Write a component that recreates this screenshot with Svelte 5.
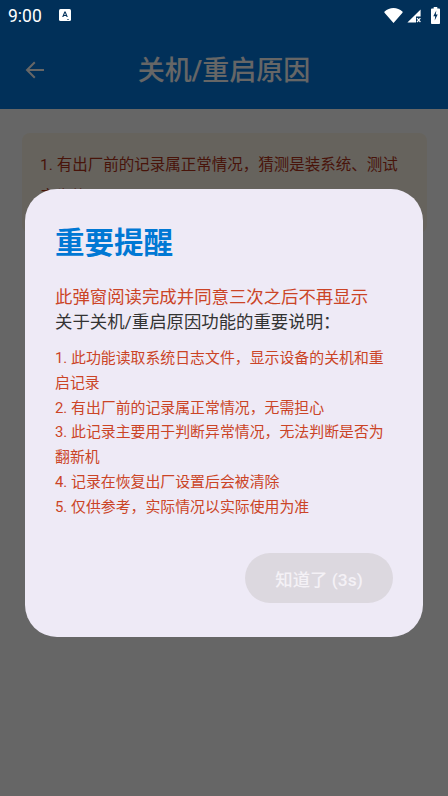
<script>
  const points = [
    "1. 此功能读取系统日志文件，显示设备的关机和重启记录",
    "2. 有出厂前的记录属正常情况，无需担心",
    "3. 此记录主要用于判断异常情况，无法判断是否为翻新机",
    "4. 记录在恢复出厂设置后会被清除",
    "5. 仅供参考，实际情况以实际使用为准",
  ];
</script>

<div class="page">
  <header class="appbar">
    <div class="status">
      <span class="time">9:00</span>
      <svg class="a-icon" viewBox="0 0 12 12" width="12" height="12">
        <rect width="12" height="12" rx="1.5" fill="#fff" />
        <path d="M3.2 8 5.4 2.6h1.2L8.8 8H7.6l-.4-1.1H4.8L4.4 8zM5.2 5.9h1.6L6 3.8z" fill="#02305a" />
        <path d="M8 10h.8v.7H8zM9.2 10H10v.7h-.8z" fill="#02305a" />
      </svg>
      <span class="spacer"></span>
      <svg class="wifi" viewBox="0 0 19 15" width="19" height="15">
        <path d="M0.6 3.6C0.2 3.9 0.2 4.4 0.5 4.7L9.5 15l9-10.3c.3-.3.3-.8-.1-1.1C15.9 1.4 12.9 0 9.5 0S3.1 1.4 0.6 3.6z" fill="#fff" />
      </svg>
      <svg class="signal" viewBox="0 0 14 14" width="14" height="14">
        <path d="M13.6 0.4V7.4H9V13.6H0.4z" fill="#fff" />
        <path d="M10 9.2l3.4 3.8M13.4 9.2 10 13" stroke="#fff" stroke-width="1.2" />
      </svg>
      <svg class="battery" viewBox="0 0 9 17" width="9" height="17">
        <path d="M2.7 0h3.6v1.6h1.9c.4 0 .8.4.8.8v13.8c0 .4-.4.8-.8.8H.8c-.4 0-.8-.4-.8-.8V2.4c0-.4.4-.8.8-.8h1.9z" fill="#fff" />
        <path d="M5.3 3.4 2.3 9.2h1.9l-.5 4.4 3-6H4.8z" fill="#02305a" />
      </svg>
    </div>
    <div class="toolbar">
      <svg class="back" viewBox="0 0 24 24" width="24" height="24">
        <path d="M21 12H4.5M11.8 4.2 4 12l7.8 7.8" fill="none" stroke="#666" stroke-width="2" />
      </svg>
      <h1>关机/重启原因</h1>
    </div>
  </header>

  <main class="content">
    <div class="note">
      1. 有出厂前的记录属正常情况，猜测是装系统、测试产生的记录
    </div>
  </main>

  <div class="scrim">
    <div class="dialog">
      <h2>重要提醒</h2>
      <p class="warn">此弹窗阅读完成并同意三次之后不再显示</p>
      <p class="lead">关于关机/重启原因功能的重要说明：</p>
      <ul>
        {#each points as point}
          <li>{point}</li>
        {/each}
      </ul>
      <div class="actions">
        <button disabled>知道了 (3s)</button>
      </div>
    </div>
  </div>
</div>

<style>
  :global(body) {
    margin: 0;
    background: #666;
  }

  .page {
    position: relative;
    width: 448px;
    height: 796px;
    overflow: hidden;
    background: #fff;
    font-family: Roboto, "Noto Sans CJK SC", sans-serif;
  }

  .appbar {
    height: 109px;
    background: #0479df;
    color: #fff;
  }

  .status {
    height: 30px;
    padding: 0 8px 0 8px;
    display: flex;
    align-items: center;
    position: relative;
    z-index: 2;
  }

  .time {
    font-size: 17.5px;
    line-height: 30px;
    padding-top: 1px;
    color: #fff;
    margin-right: 17px;
  }

  .spacer {
    flex: 1;
  }

  .signal {
    margin-left: 4px;
    margin-top: 2px;
  }

  .battery {
    margin-left: 10px;
  }

  .toolbar {
    height: 79px;
    padding-bottom: 2px;
    box-sizing: border-box;
    position: relative;
    display: flex;
    align-items: center;
    justify-content: center;
  }

  .back {
    position: absolute;
    left: 23px;
    top: 28px;
    z-index: 2;
  }

  h1 {
    margin: 0;
    font-size: 27px;
    font-weight: 500;
    color: #fff;
  }

  .content {
    padding: 24px 21px 0 22px;
  }

  .note {
    padding: 16px 18px 0;
    height: 100px;
    box-sizing: border-box;
    border-radius: 8px;
    background: #fff8e8;
    color: #b5341a;
    font-size: 15.5px;
    line-height: 32px;
  }

  .scrim {
    position: absolute;
    inset: 0;
    background: rgba(0, 0, 0, 0.6);
    display: flex;
    justify-content: center;
    padding-top: 189px;
    box-sizing: border-box;
  }

  .dialog {
    width: 398px;
    height: 448px;
    box-sizing: border-box;
    padding: 33px 30px 34px;
    border-radius: 32px;
    background: #eeeaf6;
    display: flex;
    flex-direction: column;
  }

  h2 {
    margin: 0 0 21px;
    font-size: 29.5px;
    line-height: 42px;
    font-weight: 700;
    color: #0078d4;
  }

  p {
    margin: 0;
    font-size: 17.4px;
    line-height: 25px;
  }

  .warn {
    color: #cb4426;
  }

  .lead {
    color: #333;
    margin-bottom: 11px;
  }

  ul {
    list-style: none;
    margin: 0;
    padding: 0;
    font-size: 14.9px;
    line-height: 24.8px;
    color: #cb4426;
  }

  .actions {
    margin-top: auto;
    display: flex;
    justify-content: flex-end;
  }

  button {
    width: 148px;
    height: 50px;
    border: 0;
    border-radius: 25px;
    background: #dcd8df;
    color: #f4f1f6;
    font: 500 17.4px Roboto, "Noto Sans CJK SC", sans-serif;
  }
</style>
